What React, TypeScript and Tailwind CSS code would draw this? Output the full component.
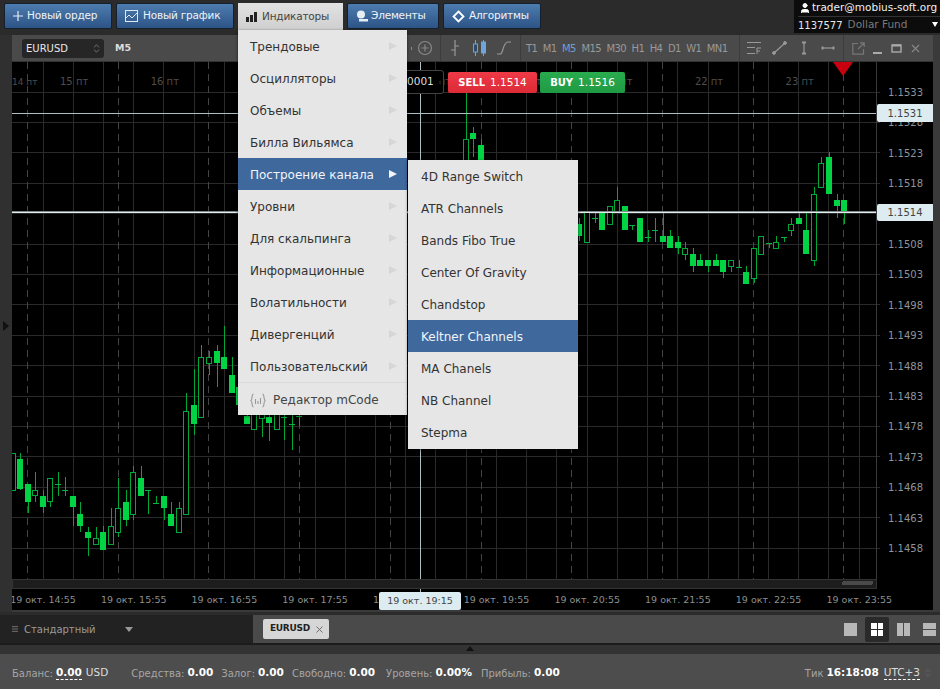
import { User, ChevronsUpDown, X, Menu } from "lucide-react";

// x, wick top, wick bottom, body top, body bottom, filled
type Candle = [number, number, number, number, number, number];

const candles: Candle[] = [
  [13, 453, 490, 453, 490, 0], [20, 453, 490, 459, 489, 1], [28, 484, 513, 484, 502, 1], [35, 472, 502, 490, 495, 0],
  [43, 490, 513, 496, 507, 1], [50, 478, 507, 478, 501, 0], [58, 472, 496, 484, 484, 1], [65, 477, 496, 490, 490, 1],
  [73, 496, 526, 496, 507, 1], [80, 502, 532, 514, 526, 1], [88, 527, 556, 532, 538, 1], [96, 527, 545, 538, 544, 0],
  [103, 526, 550, 532, 550, 1], [111, 508, 544, 526, 544, 0], [118, 478, 537, 508, 532, 0], [126, 490, 526, 502, 520, 1],
  [133, 466, 520, 472, 514, 0], [141, 466, 496, 478, 496, 1], [148, 490, 514, 490, 490, 1], [156, 496, 503, 503, 503, 1],
  [164, 496, 520, 496, 508, 1], [171, 502, 526, 514, 526, 1], [179, 502, 532, 508, 532, 0], [186, 393, 514, 411, 514, 0],
  [194, 369, 435, 405, 424, 1], [201, 345, 417, 357, 417, 0], [209, 351, 375, 357, 363, 0], [217, 345, 387, 351, 363, 1],
  [224, 326, 369, 357, 369, 1], [232, 357, 393, 375, 393, 1], [239, 370, 405, 387, 405, 1],
  [247, 400, 424, 416, 424, 1], [254, 400, 429, 400, 429, 0], [262, 400, 437, 400, 418, 0], [269, 400, 441, 417, 423, 1],
  [277, 400, 429, 400, 429, 0], [284, 400, 440, 417, 417, 1], [292, 400, 450, 424, 424, 1], [299, 400, 426, 416, 416, 1],
  [466, 92, 170, 139, 170, 0], [473, 127, 157, 133, 139, 1], [481, 139, 170, 145, 170, 1],
  [579, 218, 241, 224, 236, 1], [587, 212, 242, 212, 242, 0], [595, 212, 223, 218, 218, 1], [602, 212, 230, 212, 230, 1],
  [610, 206, 224, 206, 224, 0], [617, 187, 212, 200, 212, 0], [625, 206, 230, 206, 230, 1], [632, 225, 230, 225, 225, 1],
  [640, 218, 242, 218, 242, 1], [648, 230, 242, 237, 237, 1], [655, 218, 242, 230, 230, 1], [663, 212, 242, 236, 242, 1],
  [670, 230, 248, 236, 248, 1], [678, 236, 254, 242, 248, 1], [685, 242, 260, 248, 254, 0], [693, 248, 272, 254, 266, 1],
  [700, 254, 266, 260, 266, 1], [708, 260, 272, 260, 266, 1], [716, 254, 266, 260, 266, 1], [723, 260, 278, 260, 272, 1],
  [731, 260, 272, 260, 266, 0], [739, 260, 267, 267, 267, 1], [746, 266, 284, 272, 284, 1], [754, 248, 283, 248, 278, 0],
  [761, 236, 254, 236, 254, 0], [769, 243, 248, 243, 243, 1], [776, 236, 248, 242, 248, 0], [784, 237, 242, 237, 237, 1],
  [791, 218, 236, 224, 230, 0], [799, 212, 224, 218, 224, 1], [806, 212, 254, 230, 254, 1], [814, 187, 266, 194, 260, 0],
  [821, 157, 187, 163, 187, 0], [829, 152, 194, 157, 194, 1], [837, 194, 218, 200, 206, 1], [844, 200, 224, 200, 212, 1],
];

const prices = ["1.1533", "1.1528", "1.1523", "1.1518", "", "1.1508", "1.1503", "1.1498", "1.1493", "1.1488", "1.1483", "1.1478", "1.1473", "1.1468", "1.1463", "1.1458"];
const times = ["14:55", "15:55", "16:55", "17:55", "18:55", "19:55", "20:55", "21:55", "22:55", "23:55"];
const days = ["15", "16", "17", "18", "19", "20", "21", "22", "23"];
const periods = ["T1", "M1", "M5", "M15", "M30", "H1", "H4", "D1", "W1", "MN1"];
const mainMenu = ["Трендовые", "Осцилляторы", "Объемы", "Билла Вильямса", "Построение канала", "Уровни", "Для скальпинга", "Информационные", "Волатильности", "Дивергенций", "Пользовательский"];
const subMenu = ["4D Range Switch", "ATR Channels", "Bands Fibo True", "Center Of Gravity", "Chandstop", "Keltner Channels", "MA Chanels", "NB Channel", "Stepma"];

function BlueButton({ icon, label, width, gap }: { icon: React.ReactNode; label: string; width: string; gap: string }) {
  return (
    <button className={`${width} ${gap} h-[26px] flex items-center whitespace-nowrap pl-2 rounded-[2px] border border-[#14202e] bg-gradient-to-b from-[#4d7cae] to-[#2d5487] text-[10.5px] tracking-[-0.2px] text-[#eef3f8]`}>
      {icon}
      {label}
    </button>
  );
}

function Chart() {
  return (
    <svg viewBox="12 62 921 550" className="w-[921px] h-[550px] block" shapeRendering="crispEdges">
      {Array.from({ length: 28 }, (_, i) => (
        <line key={i} x1={Math.round(42.5 + i * 30.23)} x2={Math.round(42.5 + i * 30.23)} y1={62} y2={579} stroke="#2a2a2a" />
      ))}
      {Array.from({ length: 16 }, (_, i) => (
        <line key={i} x1={12} x2={880} y1={Math.round(91.5 + i * 30.4)} y2={Math.round(91.5 + i * 30.4)} stroke="#2a2a2a" />
      ))}
      {Array.from({ length: 10 }, (_, i) => (
        <line key={i} x1={Math.round(27 + i * 90.7)} x2={Math.round(27 + i * 90.7)} y1={62} y2={579} stroke="#444" strokeDasharray="7 5" />
      ))}
      {candles.map(([x, hi, lo, top, bot, filled], i) => (
        <g key={i}>
          <line x1={x} x2={x} y1={hi} y2={lo} stroke="#00a838" />
          {top === bot ? (
            <line x1={x - 3} x2={x + 3} y1={top} y2={top} stroke="#00b83c" />
          ) : filled ? (
            <rect x={x - 3} y={top} width={6} height={bot - top} fill="#00d442" />
          ) : (
            <rect x={x - 2.5} y={top + 0.5} width={5} height={bot - top} fill="#000" stroke="#00a838" />
          )}
        </g>
      ))}
      <line x1={12} x2={877} y1={113} y2={113} stroke="#aebfc3" />
      <rect x={12} y={212} width={865} height={1} fill="#e0ecee" />
      <rect x={12} y={211} width={865} height={1} fill="#7f8b8d" />
      <line x1={420} x2={420} y1={62} y2={595} stroke="#aebfc3" />
      <polygon points="833,62 853,62 843,76" fill="#c9000f" shapeRendering="auto" />
      <line x1={876} x2={876} y1={62} y2={579} stroke="#3a3a3a" />
      <rect x={12} y={579} width={864} height={9} fill="#1d1d1d" stroke="#333" />
      <rect x={842} y={581} width={31} height={4} rx={2} fill="#4a4a4a" />
      <rect x={12} y={610} width={921} height={2} fill="#3a3a3a" />
      {days.map((d, i) => (
        <text key={d} x={60 + i * 90.7} y={85} fontSize={10} fill="#4e4e4e">{d} пт</text>
      ))}
      <text x={12} y={85} fontSize={9} fill="#4e4e4e">14 пт</text>
      {prices.map((p, i) =>
        p ? <text key={p} x={888} y={96 + i * 30.4} fontSize={10} fill="#8f949a">{p}</text> : null,
      )}
      {times.map((t, i) => (
        <text key={t} x={43 + i * 90.7} y={603} fontSize={9.5} fill="#8b8f8f" textAnchor="middle">19 окт. {t}</text>
      ))}
    </svg>
  );
}

function Toolbar() {
  return (
    <div className="h-[27px] flex items-center bg-[#4a4a4a] border-b border-[#333] text-[10px] text-[#999] relative">
      <div className="ml-[10px] w-[82px] h-[19px] rounded-[3px] bg-[#262626] flex items-center justify-between pl-1 pr-[2px] text-[#e8e8e8]">
        EURUSD
        <ChevronsUpDown className="w-[11px] h-[11px] text-[#777]" />
      </div>
      <span className="ml-[11px] text-[9.5px] font-bold text-[#ddd]">M5</span>
      <div className="ml-auto flex items-center h-full">
        <div className="flex items-center h-full w-[80px] border-l border-[#3d3d3d] pl-[8px]">
          <svg width="12" height="18" viewBox="0 0 12 18" fill="none" stroke="#999" strokeWidth="1.2"><path d="M6 1v16M2 11h4M6 7h4" /></svg>
          <svg width="15" height="18" viewBox="0 0 15 18" fill="#6ea4dc" stroke="#6ea4dc" className="ml-[11px]"><path d="M3.5 1v16M11.5 1v16" /><rect x="1.5" y="5" width="4" height="8" fill="#2d4a68" /><rect x="9.5" y="3" width="4" height="11" /></svg>
          <svg width="16" height="18" viewBox="0 0 16 18" fill="none" stroke="#999" strokeWidth="1.2" className="ml-[9px]"><path d="M1 15h3c2 0 2-2 3-5s2-7 5-7h3" /></svg>
        </div>
        <div className="flex items-center h-full w-[219px] border-l border-[#3d3d3d] pl-[5px] gap-[5.5px] text-[10px] tracking-[-0.6px] whitespace-nowrap">
          {periods.map((p) => (
            <span key={p} className={p === "M5" ? "text-[#6d9fd8]" : "text-[#999]"}>{p}</span>
          ))}
        </div>
        <div className="flex items-center h-full w-[104px] border-l border-[#3d3d3d] pl-[7px] gap-[10px]">
          <svg width="15" height="14" viewBox="0 0 15 14" fill="none" stroke="#999" strokeWidth="1"><path d="M0 1.5h14M0 6.5h8M0 12.5h8M10 7h4M10 7v6M10 10h3" /></svg>
          <svg width="15" height="14" viewBox="0 0 15 14" fill="#999" stroke="#999"><path d="M2 12 13 2" strokeWidth="1.2" /><circle cx="2" cy="12" r="1.4" /><circle cx="13" cy="2" r="1.4" /></svg>
          <svg width="14" height="14" viewBox="0 0 14 14" fill="#999" stroke="#999"><path d="M7 1v12" strokeWidth="1.2" /><path d="M5 1.5h4M5 12.5h4" strokeWidth="2" /></svg>
          <svg width="14" height="14" viewBox="0 0 14 14" fill="#999" stroke="#999"><path d="M1 7h12" strokeWidth="1.2" /><path d="M1.5 5.5v3M12.5 5.5v3" strokeWidth="2" /></svg>
        </div>
        <div className="flex items-center h-full w-[90px] border-l border-[#3d3d3d] pl-[8px] gap-[6px]">
          <svg width="13" height="13" viewBox="0 0 13 13" fill="none" stroke="#777" strokeWidth="1.2"><path d="M6 1.5H.8v10.7h10.7V7M8 .8h4.2V5M12 1 6 7" /></svg>
          <svg width="13" height="13" viewBox="0 0 13 13" fill="none" stroke="#aaa" strokeWidth="2"><path d="M2 11h9" /></svg>
          <svg width="13" height="13" viewBox="0 0 13 13" fill="none" stroke="#aaa" strokeWidth="1.4"><rect x="2" y="3" width="9" height="7" /><path d="M2 3.5h9" strokeWidth="2" /></svg>
          <X className="w-[13px] h-[13px] text-[#888]" />
        </div>
      </div>
      <span className="absolute left-[399px] top-[12px] w-[1px] h-[3px] bg-[#888]" />
      <svg width="16" height="16" viewBox="0 0 16 16" fill="none" stroke="#888" strokeWidth="1.2" className="absolute left-[405px] top-[5px]"><circle cx="8" cy="8" r="6.5" /><path d="M8 4.5v7M4.5 8h7" /></svg>
    </div>
  );
}

function MenuList({ items, active, tail }: { items: string[]; active: string; tail?: boolean }) {
  return (
    <>
      {items.map((item) => (
        <div key={item} className={`h-8 flex items-center justify-between pt-[2px] pr-[10px] ${tail ? "pl-3" : "pl-[13px]"} ${item === active ? "bg-[#3f689c] text-[#f2f5f9]" : "text-[#333]"}`}>
          {item}
          {tail && <span className={`w-0 h-0 -mt-[2px] border-y-[4px] border-y-transparent border-l-[8px] ${item === active ? "border-l-[#f2f5f9]" : "border-l-[#d6d6d6]"}`} />}
        </div>
      ))}
    </>
  );
}

export default function App() {
  return (
    <div className="relative w-[940px] h-[689px] overflow-hidden flex flex-col bg-[#2b2b2b] font-['DejaVu_Sans',sans-serif] text-[12px]">
      {/* Top bar */}
      <div className="h-[35px] flex items-start">
        <div className="flex gap-[4px] pl-1 pt-[3px]">
          <BlueButton width="w-[108px]" gap="gap-[4px]" label="Новый ордер" icon={
            <svg width="10" height="10" viewBox="0 0 11 11" stroke="#e6edf5" strokeWidth="1.3"><path d="M5.5 0v11M0 5.5h11" /></svg>
          } />
          <BlueButton width="w-[118px]" gap="gap-[5px]" label="Новый график" icon={
            <svg width="13" height="12" viewBox="0 0 13 12" fill="none" stroke="#dfe7f0" strokeWidth="1"><rect x=".5" y=".5" width="12" height="11" /><path d="M1 8l3-3 3 3 5-5" /></svg>
          } />
          <div className="w-[105px] h-[27px] flex items-center gap-[5px] pl-2 bg-gradient-to-b from-[#e2e2e2] to-[#cfcfcf] text-[#444] text-[10.5px] tracking-[-0.2px] whitespace-nowrap">
            <svg width="11" height="10" viewBox="0 0 11 10" fill="#222"><path d="M0 5h3v5H0zM4 3h3v7H4zM8 0h3v10H8z" /></svg>
            Индикаторы
          </div>
          <BlueButton width="w-[92px]" gap="gap-[3px]" label="Элементы" icon={
            <svg width="12" height="12" viewBox="0 0 12 12" fill="#e6edf5"><circle cx="5" cy="4.5" r="4" /><path d="M3 9h9v2.5H3z" /></svg>
          } />
          <BlueButton width="w-[98px]" gap="gap-[4px]" label="Алгоритмы" icon={
            <svg width="13" height="13" viewBox="0 0 13 13" fill="none" stroke="#fff" strokeWidth="1.8"><path d="M6.5 1.5l5 5-5 5-5-5z" /></svg>
          } />
        </div>
        <div className="ml-auto w-[146px] h-[33px] flex flex-col bg-[#0c0c0c] pl-[4px]">
          <div className="h-4 flex items-center gap-[1px] text-[#f0f0f0] text-[10.5px] pl-[1px] whitespace-nowrap">
            <User className="w-[12px] h-[12px] text-white fill-white shrink-0" />
            trader@mobius-soft.org
          </div>
          <div className="h-[17px] flex items-center border-t border-[#333] relative whitespace-nowrap">
            <span className="text-[#e8e8e8] mr-[5px] text-[10px]">1137577</span>
            <span className="text-[#7a7a7a] text-[10.5px]">Dollar Fund</span>
            <span className="absolute right-[2px] top-[5px] w-0 h-0 border-x-[3.5px] border-x-transparent border-t-[5px] border-t-white" />
          </div>
        </div>
      </div>

      {/* Chart panel */}
      <div className="flex">
        <div className="w-3 h-[577px] flex items-center pt-[5px] bg-[#303030]">
          <span className="w-0 h-0 ml-[3px] border-y-[5px] border-y-transparent border-l-[6px] border-l-[#111]" />
        </div>
        <div className="w-[921px] flex flex-col bg-black">
          <Toolbar />
          <Chart />
        </div>
        <div className="w-[7px] bg-[#3a3a3a]" />
      </div>

      {/* Tabs */}
      <div className="h-[30px] flex border-b-2 border-[#1c1c1c] mt-[3px]">
        <div className="w-[253px] flex items-center gap-[5px] pl-[11px] bg-[#222] text-[#9a9a9a] text-[10px] relative">
          <Menu className="w-[8px] h-[10px] text-[#999]" />
          Стандартный
          <span className="absolute left-[125px] top-[12px] w-0 h-0 border-x-[4px] border-x-transparent border-t-[5px] border-t-[#999]" />
        </div>
        <div className="flex-1 flex items-center bg-[#4a4a4a] pl-[10px] pr-[4px]">
          <div className="w-[66px] h-[20px] flex items-center justify-between pl-[7px] pr-[4px] rounded-[2px] bg-[#d6d6d6] text-[#222] text-[9px] font-bold tracking-[-0.3px]">
            EURUSD
            <X className="w-[11px] h-[11px] text-[#666]" />
          </div>
          <div className="ml-auto flex items-center gap-[8px]">
            <div className="w-[13px] h-[13px] bg-[#b8b8b8]" />
            <div className="w-[24px] h-[25px] rounded-[2px] bg-[#2a2a2a] grid grid-cols-2 gap-[1px] p-[6px]">
              <div className="bg-white" /><div className="bg-white" /><div className="bg-white" /><div className="bg-white" />
            </div>
            <div className="w-[13px] h-[13px] grid grid-cols-2 gap-[1px]">
              <div className="bg-[#b8b8b8]" /><div className="bg-[#b8b8b8]" />
            </div>
            <div className="w-[13px] h-[13px] ml-[5px] grid grid-rows-2 gap-[1px]">
              <div className="bg-[#b8b8b8]" /><div className="bg-[#b8b8b8]" />
            </div>
          </div>
        </div>
      </div>
      <div className="h-[9px] bg-[#333] flex items-start justify-center">
        <span className="w-0 h-0 mt-[1px] border-x-[4px] border-x-transparent border-b-[5px] border-b-[#111]" />
      </div>

      {/* Status */}
      <div className="flex-1 flex items-center pl-3 pr-[7px] pt-[3px] bg-[#4d4d4d] text-[#a6a6a6] text-[10px]">
        <div className="flex items-center gap-[3px]">
          Баланс:
          <b className="text-[10.5px] text-white border-b border-dashed border-white leading-[13px]">0.00</b>
          <span className="text-[10.5px] text-[#ddd] ml-[1px]">USD</span>
        </div>
        <div className="flex items-center gap-[3px] ml-[23px]">Средства: <b className="text-[10.5px] text-white">0.00</b></div>
        <div className="flex items-center gap-[3px] ml-[8px]">Залог: <b className="text-[10.5px] text-white">0.00</b></div>
        <div className="flex items-center gap-[3px] ml-[8px]">Свободно: <b className="text-[10.5px] text-white">0.00</b></div>
        <div className="flex items-center gap-[3px] ml-[11px]">Уровень: <b className="text-[10.5px] text-white">0.00%</b></div>
        <div className="flex items-center gap-[3px] ml-[9px]">Прибыль: <b className="text-[10.5px] text-white">0.00</b></div>
        <div className="ml-auto flex items-center gap-[3px]">
          Тик <b className="text-[10.5px] text-white">16:18:08</b>
          <span className="text-[10.5px] ml-[2px] text-[#ddd] border-b border-dashed border-white leading-[13px]">UTC+3</span>
          <ChevronsUpDown className="w-[10px] h-[10px] text-[#666]" />
        </div>
      </div>

      {/* Order widgets over the chart */}
      <div className="absolute left-[396px] top-[70px] w-[48px] h-[24px] flex items-center justify-end gap-[4px] pr-[1px] rounded-[3px] border border-[#444] bg-black text-[#ddd] text-[10.5px]">
        0.0001
        <ChevronsUpDown className="w-[11px] h-[11px] text-[#777]" />
      </div>
      <div className="absolute left-[448px] top-[72px] w-[89px] h-[21px] flex items-center justify-center gap-[5px] rounded-[2px] bg-gradient-to-b from-[#ee3a46] to-[#dc2a36] text-white text-[10.5px]">
        <b className="text-[10px]">SELL</b> 1.1514
      </div>
      <div className="absolute left-[540px] top-[72px] w-[85px] h-[21px] flex items-center justify-center gap-[5px] rounded-[2px] bg-gradient-to-b from-[#2aab4e] to-[#1f9a44] text-white text-[10.5px]">
        <b className="text-[10px]">BUY</b> 1.1516
      </div>
      <div className="absolute left-[877px] top-[104px] w-[56px] h-[18px] flex items-center justify-center rounded-l-[2px] bg-[#dcecf0] text-[#444] text-[10px]">1.1531</div>
      <div className="absolute left-[877px] top-[204px] w-[56px] h-[17px] flex items-center justify-center rounded-l-[2px] bg-[#dcecf0] text-[#444] text-[10px]">1.1514</div>
      <div className="absolute left-[379px] top-[592px] w-[82px] h-[18px] flex items-center justify-center rounded-[2px] bg-[#dcecf0] text-[#444] text-[9.5px]">19 окт. 19:15</div>

      {/* Open menus */}
      <div className="absolute left-[238px] top-[30px] w-[169px] h-[385px] bg-[#e6e6e6] shadow-[0_1px_3px_rgba(0,0,0,0.6)] text-[12px]">
        <MenuList items={mainMenu} active="Построение канала" tail />
        <div className="h-[33px] flex items-center gap-[7px] pl-3 pt-[2px] border-t border-[#dadada] text-[#444]">
          <svg width="16" height="15" viewBox="0 0 16 15" fill="none" stroke="#999" strokeWidth="1.1"><path d="M3.5 1C1.5 1 2.5 6.5 1 7.5c1.5 1 .5 6.5 2.5 6.5M12.5 1c2 0 1 5.5 2.5 6.5-1.5 1-.5 6.5-2.5 6.5M5.5 6v5M8 8v3M10.5 5v6" /></svg>
          Редактор mCode
        </div>
      </div>
      <div className="absolute left-[408px] top-[160px] w-[170px] h-[289px] bg-[#e6e6e6] shadow-[0_1px_3px_rgba(0,0,0,0.6)] text-[12px]">
        <MenuList items={subMenu} active="Keltner Channels" />
      </div>
    </div>
  );
}
